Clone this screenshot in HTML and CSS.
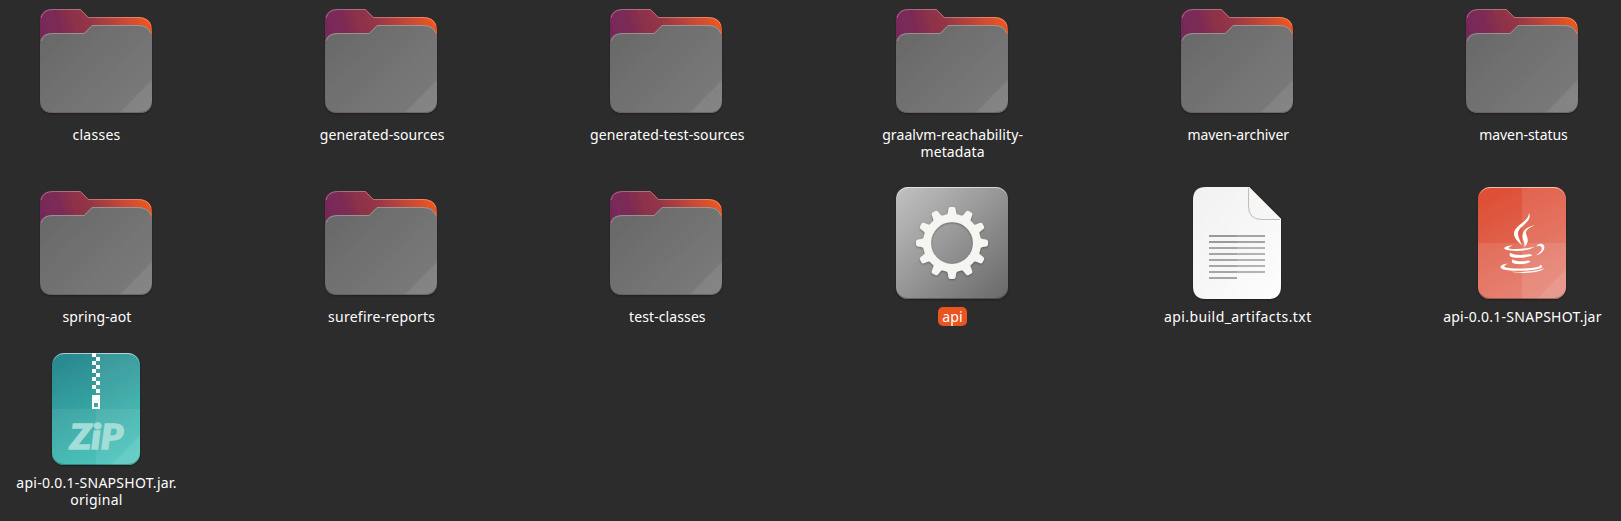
FILE: index.html
```
<!DOCTYPE html>
<html lang="en">
<head>
<meta charset="utf-8">
<title>target</title>
<link rel="stylesheet" href="styles.css">
</head>
<body>
<svg class="defs" aria-hidden="true">
  <defs>
    <linearGradient id="back" x1="12" y1="38" x2="116" y2="4" gradientUnits="userSpaceOnUse">
      <stop offset="0" stop-color="#77285a"/><stop offset=".16" stop-color="#7c2b55"/><stop offset=".28" stop-color="#8b304b"/><stop offset=".45" stop-color="#973646"/><stop offset=".75" stop-color="#cc4a34"/><stop offset=".92" stop-color="#ea5420"/>
    </linearGradient>
    <linearGradient id="front" x1="20" y1="30" x2="108" y2="120" gradientUnits="userSpaceOnUse">
      <stop offset="0" stop-color="#696969"/><stop offset="1" stop-color="#7b7b7b"/>
    </linearGradient>
    <linearGradient id="metal" x1="0" y1="0" x2="1" y2="1">
      <stop offset="0" stop-color="#c2c2c2"/><stop offset="1" stop-color="#686868"/>
    </linearGradient>
    <linearGradient id="edge" x1="0" y1="0" x2="0" y2="1">
      <stop offset="0" stop-color="#fff" stop-opacity=".6"/><stop offset=".08" stop-color="#fff" stop-opacity="0"/><stop offset=".93" stop-color="#000" stop-opacity="0"/><stop offset="1" stop-color="#000" stop-opacity=".3"/>
    </linearGradient>
    <linearGradient id="red" x1=".3" y1="0" x2=".7" y2="1">
      <stop offset="0" stop-color="#de4f36"/><stop offset="1" stop-color="#e37767"/>
    </linearGradient>
    <linearGradient id="teal" x1=".3" y1="0" x2=".7" y2="1">
      <stop offset="0" stop-color="#2b8a90"/><stop offset="1" stop-color="#3fc2b7"/>
    </linearGradient>
    <linearGradient id="paper" x1="0" y1="0" x2="1" y2="1">
      <stop offset="0" stop-color="#f1f1f1"/><stop offset="1" stop-color="#fdfdfd"/>
    </linearGradient>
    <clipPath id="sheet"><rect x="20" y="8" width="88" height="112" rx="12"/></clipPath>
    <filter id="shade" x="-10%" y="-10%" width="120%" height="125%"><feDropShadow dx="0" dy="1" stdDeviation="1.3" flood-color="#000" flood-opacity=".35"/></filter>

    <symbol id="folder" viewBox="0 8 128 116">
      <g filter="url(#shade)">
        <path fill="url(#back)" d="M8 48V24q0-12 12-12H48.500l8 8H106q14 0 14 14v16z"/>
        <path fill="none" stroke="#fff" stroke-opacity=".3" d="M9 21q2-8.500 12-8.500H48.300l8 8H106q10 0 13 8"/>
        <path fill="url(#front)" d="M8 48q0-12 12-12H52l8-8H106q14 0 14 14v61q0 13-13 13H21q-13 0-13-13z"/>
        <path fill="none" stroke="#fff" stroke-opacity=".28" d="M9 44q2-7.500 12-7.500H52.200l8-8H106q10 0 13 8"/>
        <path fill="#fff" fill-opacity=".08" d="M120 83v20q0 13-13 13H87.500z"/>
        <path fill="none" stroke="#6b5a50" stroke-opacity=".7" d="M9 109q3 6.500 12 6.500h86q9 0 12-6.500"/>
      </g>
    </symbol>

    <symbol id="gear" viewBox="0 8 128 116">
      <rect x="8" y="8" width="112" height="112" rx="12" fill="url(#metal)" filter="url(#shade)"/>
      <rect x="8.500" y="8.500" width="111" height="111" rx="11.500" fill="none" stroke="url(#edge)"/>
      <g filter="url(#shade)">
        <circle cx="64" cy="64" r="25" fill="none" stroke="#f5f5f2" stroke-width="8"/>
        <g fill="#f5f5f2">
          <path id="t" d="M57 38q2.500-1.500 2.900-4.500l.5-3.500q.4-2 2-2h3.200q1.600 0 2 2l.5 3.500q.4 3 2.900 4.500z"/>
          <use href="#t" transform="rotate(30 64 64)"/><use href="#t" transform="rotate(60 64 64)"/>
          <use href="#t" transform="rotate(90 64 64)"/><use href="#t" transform="rotate(120 64 64)"/>
          <use href="#t" transform="rotate(150 64 64)"/><use href="#t" transform="rotate(180 64 64)"/>
          <use href="#t" transform="rotate(210 64 64)"/><use href="#t" transform="rotate(240 64 64)"/>
          <use href="#t" transform="rotate(270 64 64)"/><use href="#t" transform="rotate(300 64 64)"/>
          <use href="#t" transform="rotate(330 64 64)"/>
        </g>
      </g>
    </symbol>

    <symbol id="text" viewBox="0 8 128 116">
      <path filter="url(#shade)" fill="url(#paper)" d="M33 8H76l32 32v67q0 13-13 13H33q-13 0-13-13V21Q20 8 33 8z"/>
      <path fill="#f7f6f5" d="M76 8l32 32H88q-12 0-12-12z"/>
      <path fill="none" stroke="#bdbdbd" d="M75.500 9v18q0 13.500 13 13.500h18.500"/>
      <path stroke="#999" stroke-width="2" d="M36 57h28M36 63h28"/>
      <path stroke="#a5a5a5" stroke-width="2" d="M64 57h28M64 63h28M36 69h28M36 75h28M36 81h28M36 87h28M36 93h28M36 99h28"/>
      <path stroke="#b3b3b3" stroke-width="2" d="M64 69h28M64 75h28M64 81h28M64 87h28M64 93h28"/>
    </symbol>

    <symbol id="jar" viewBox="0 8 128 116">
      <rect x="20" y="8" width="88" height="112" rx="12" fill="url(#red)" filter="url(#shade)"/>
      <g clip-path="url(#sheet)" fill="#fff"><path fill-opacity=".1" d="M64 8h44v112H64z"/><path fill-opacity=".1" d="M20 64h88v56H20z"/><path fill-opacity=".09" d="M108 90v30H79z"/></g>
      <rect x="20.500" y="8.500" width="87" height="111" rx="11.500" fill="none" stroke="url(#edge)"/>
      <g fill="#fff">
        <path d="M71 34c4 9-10.500 13-11 20-.2 4 2.500 8 4 12.500-4-4-8.500-7.500-8-12.500.8-8 14.500-11 15-20z"/>
        <path d="M77 46.300c-5 1.700-9.500 4.700-9 7.700.5 4 4.500 7.500-1.500 14 .5-5-2.500-7-2-11.500.5-6 6-9.400 12.500-10.200z"/>
        <path d="M54.500 66.500c-5.500 0-11.500 2.600-6 4.300 7.500 2.200 23 1.200 28-3.300-8 2.500-20 3.200-25.500 2-1.500-.6 1-2 3.500-3z"/>
        <path d="M78 67.500c6-3 9.500 3.500-.5 9 12-3 10.500-13.500 3.500-11.500q-2 .7-3 2.500z"/>
        <path d="M52 73.800c-1 3-.5 4.600 7 4.900 6 .2 12-.6 15.500-2.400l-3-1.300c-6 1.300-15 1.800-19.500-1.200z"/>
        <path d="M54.300 80.500c-1.300 3 0 4.400 5.700 4.600 5 .2 10-.6 12.700-2.600l-2.700-1c-5 1.200-12 1.200-15.700-1z"/>
        <path d="M50 84.500c-6.500.3-10.500 4-4.500 6 8 2.200 35 1.600 38.500-2.200q.8-1.500-2-2.500.8 1.400-2.500 2.200c-8 1.700-26 2.200-32.500.3-2-.8.500-2.800 3-3.800z"/>
        <path d="M53 92.800c12 2.500 31 .7 33.200-3.800-6 3.400-21 4.300-33.200 3.800z"/>
      </g>
    </symbol>

    <symbol id="zip" viewBox="0 8 128 116">
      <rect x="20" y="8" width="88" height="112" rx="12" fill="url(#teal)" filter="url(#shade)"/>
      <g clip-path="url(#sheet)" fill="#fff"><path fill-opacity=".07" d="M64 8h44v112H64z"/><path fill-opacity=".07" d="M20 64h88v56H20z"/><path fill-opacity=".09" d="M108 90v30H79z"/></g>
      <rect x="20.500" y="8.500" width="87" height="111" rx="11.500" fill="none" stroke="url(#edge)"/>
      <path fill="#fff" d="M60 8h4v4h-4zM64 12h4v4h-4zM60 16h4v4h-4zM64 20h4v4h-4zM60 24h4v4h-4zM64 28h4v4h-4zM60 32h4v4h-4zM64 36h4v4h-4zM60 40h4v4h-4zM64 44h4v4h-4z"/>
      <path fill="#fff" fill-rule="evenodd" d="M60 50h8v14h-8zM62 58v4h4v-4z"/>
      <text class="zip-mark" x="38" y="104" textLength="53" lengthAdjust="spacingAndGlyphs">ZiP</text>
    </symbol>
  </defs>
</svg>
<main class="files">
  <figure class="file"><svg class="icon"><use href="#folder"/></svg><figcaption class="name loose">classes</figcaption></figure>
  <figure class="file"><svg class="icon"><use href="#folder"/></svg><figcaption class="name">generated-sources</figcaption></figure>
  <figure class="file"><svg class="icon"><use href="#folder"/></svg><figcaption class="name">generated-test-sources</figcaption></figure>
  <figure class="file"><svg class="icon"><use href="#folder"/></svg><figcaption class="name">graalvm-reachability-<br>metadata</figcaption></figure>
  <figure class="file"><svg class="icon"><use href="#folder"/></svg><figcaption class="name tight">maven-archiver</figcaption></figure>
  <figure class="file"><svg class="icon"><use href="#folder"/></svg><figcaption class="name tight">maven-status</figcaption></figure>
  <figure class="file"><svg class="icon"><use href="#folder"/></svg><figcaption class="name">spring-aot</figcaption></figure>
  <figure class="file"><svg class="icon"><use href="#folder"/></svg><figcaption class="name loose">surefire-reports</figcaption></figure>
  <figure class="file"><svg class="icon"><use href="#folder"/></svg><figcaption class="name">test-classes</figcaption></figure>
  <figure class="file"><svg class="icon"><use href="#gear"/></svg><figcaption class="name selected">api</figcaption></figure>
  <figure class="file"><svg class="icon"><use href="#text"/></svg><figcaption class="name wide">api.build_artifacts.txt</figcaption></figure>
  <figure class="file"><svg class="icon"><use href="#jar"/></svg><figcaption class="name loose">api-0.0.1-SNAPSHOT.jar</figcaption></figure>
  <figure class="file"><svg class="icon"><use href="#zip"/></svg><figcaption class="name loose">api-0.0.1-SNAPSHOT.jar.<br>original</figcaption></figure>
</main>
</body>
</html>
```
FILE: styles.css
```
body {
  margin: 0;
  background: #2c2c2c;
  color: #fff;
  font: 14px/17px "Noto Sans", sans-serif;
  overflow: hidden;
}
.defs { position: absolute; width: 0; height: 0; }
.files {
  box-sizing: border-box;
  height: 521px;
  padding: 5px 11px 0 8px;
  display: grid;
  grid-template-columns: repeat(6, 176px);
  grid-template-rows: 182px 166px 163px;
  justify-content: space-between;
}
.file {
  margin: 0;
  display: flex;
  flex-direction: column;
  align-items: center;
}
.icon { width: 128px; height: 116px; flex: none; }
.name {
  margin: 4px 0 0 2px;
  padding: 1px 5px;
  border-radius: 5px;
  text-align: center;
  white-space: nowrap;
  letter-spacing: .1px;
}
.tight { letter-spacing: -.05px; margin-left: 3px; }
.loose { letter-spacing: .26px; margin-left: 1px; }
.wide { letter-spacing: .43px; }
.selected { background: #e95420; padding: 1px 4px; }
.zip-mark {
  font: italic 900 35px Lato, sans-serif;
  fill: #a3ddd8;
  stroke: #a3ddd8;
  stroke-width: 1.6px;
}
```
